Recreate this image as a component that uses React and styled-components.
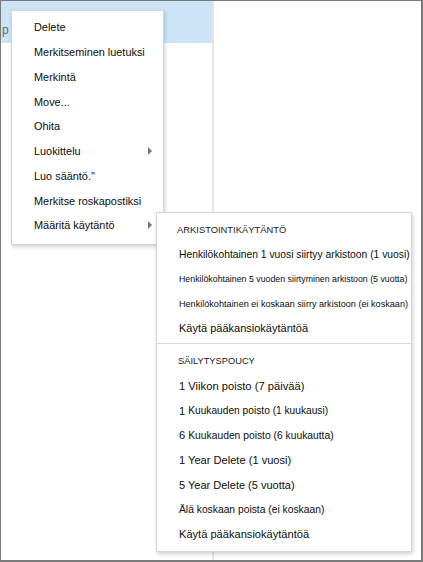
import React from "react";
import styled, { createGlobalStyle } from "styled-components";

const GlobalStyle = createGlobalStyle`
  html, body {
    margin: 0;
    padding: 0;
    background: #fff;
  }
  body {
    font-family: "Liberation Sans", Arial, sans-serif;
    color: #111;
  }
`;

const Frame = styled.div`
  position: relative;
  width: 423px;
  height: 562px;
  box-sizing: border-box;
  border: 1px solid #7a7a7a;
  border-right-width: 2px;
  border-bottom-width: 2px;
  display: flex;
  overflow: hidden;
`;

const ListPane = styled.div`
  width: 211px;
  border-right: 2px solid #e6e6e6;
  display: flex;
  flex-direction: column;
`;

const MessageRow = styled.div`
  height: 42px;
  box-sizing: border-box;
  background: ${p => (p.selected ? "#cce4f7" : "#fff")};
  display: flex;
  align-items: flex-end;
  padding: 0 0 6px 1px;
  font-size: 12px;
  color: #666;
  white-space: nowrap;
  overflow: hidden;
`;

const ReadingPane = styled.div`
  flex: 1;
  background: #fff;
`;

// menus sit over the panes
const Menu = styled.div`
  position: absolute;
  left: ${p => p.left}px;
  top: ${p => p.top}px;
  width: ${p => p.width}px;
  box-sizing: border-box;
  padding: ${p => p.pad};
  background: #fff;
  border: 1px solid #d6d6d6;
  box-shadow: 1px 2px 4px rgba(0, 0, 0, 0.18);
`;

const Item = styled.div`
  position: relative;
  height: 24.75px;
  display: flex;
  align-items: center;
  padding-left: ${p => p.indent}px;
  font-size: ${p => p.size || 10.9}px;
  color: #0d0d0d;
  white-space: nowrap;
`;

const Header = styled(Item)`
  text-transform: uppercase;
  color: #222;
`;

const Big = styled.span`
  font-size: 11.2px;
  margin-right: 3px;
`;

const Arrow = styled.span`
  position: absolute;
  right: 11px;
  top: 50%;
  margin-top: -4px;
  width: 0;
  height: 0;
  border-top: 4px solid transparent;
  border-bottom: 4px solid transparent;
  border-left: 4px solid #777;
`;

const Separator = styled.div`
  height: 1px;
  background: #dcdcdc;
  margin: 2px 0 5px;
`;

const mainItems = [
  { label: "Delete" },
  { label: "Merkitseminen luetuksi" },
  { label: "Merkintä" },
  { label: "Move..." },
  { label: "Ohita" },
  { label: "Luokittelu", sub: true },
  { label: "Luo sääntö.\"" },
  { label: "Merkitse roskapostiksi" },
  { label: "Määritä käytäntö", sub: true },
];

const archive = [
  { label: "Henkilökohtainen 1 vuosi siirtyy arkistoon (1 vuosi)", size: 10.3 },
  { label: "Henkilökohtainen 5 vuoden siirtyminen arkistoon (5 vuotta)", size: 8.8 },
  { label: "Henkilökohtainen ei koskaan siirry arkistoon (ei koskaan)", size: 9.1 },
  { label: "Käytä pääkansiokäytäntöä", size: 11 },
];

const retention = [
  { label: "1 Viikon poisto (7 päivää)", size: 11.2 },
  { num: "1", label: "Kuukauden poisto (1 kuukausi)", size: 10.2 },
  { num: "6", label: "Kuukauden poisto (6 kuukautta)", size: 10.3 },
  { label: "1 Year Delete (1 vuosi)", size: 11.1 },
  { label: "5 Year Delete (5 vuotta)", size: 11 },
  { label: "Älä koskaan poista (ei koskaan)", size: 10.3 },
  { label: "Käytä pääkansiokäytäntöä", size: 11.1 },
];

export function ContextMenu() {
  return <Menu left={10} top={9} width={153} pad="4px 0 6px">
    {mainItems.map(it => <Item key={it.label} indent={22}>
      {it.label}
      {it.sub && <Arrow/>}
    </Item>)}
  </Menu>
}

export function PolicyMenu() {
  return <Menu left={155} top={211} width={256} pad="4px 0 4px">
    <Header indent={20} size={9.4}>Arkistointikäytäntö</Header>
    {archive.map(it => <Item key={it.label} indent={22} size={it.size}>
      {it.label}
    </Item>)}
    <Separator/>
    <Header indent={21} size={9.3}>Säilytyspoucy</Header>
    {retention.map((it, i) => <Item key={i} indent={22} size={it.size}>
      {it.num && <Big>{it.num}</Big>}
      {it.label}
    </Item>)}
  </Menu>
}

export default function App() {
  return <>
    <GlobalStyle/>
    <Frame>
      <ListPane>
        <MessageRow selected>p</MessageRow>
      </ListPane>
      <ReadingPane/>
      <ContextMenu/>
      <PolicyMenu/>
    </Frame>
  </>
}
